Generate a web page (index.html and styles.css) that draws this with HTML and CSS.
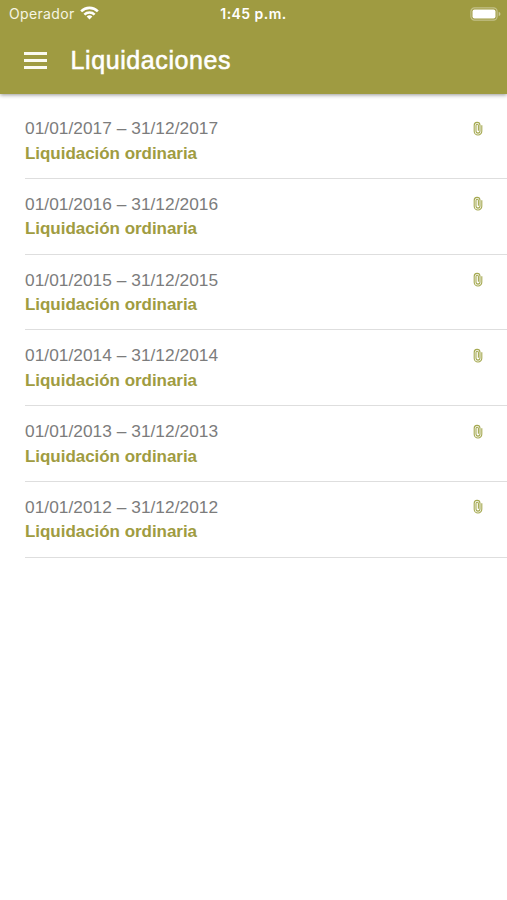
FILE: index.html
```html
<!DOCTYPE html>
<html lang="es">
<head>
<meta charset="utf-8">
<meta name="viewport" content="width=device-width, initial-scale=1">
<title>Liquidaciones</title>
<link rel="stylesheet" href="styles.css">
</head>
<body>
<svg class="defs" aria-hidden="true">
  <symbol id="clip" viewBox="0 0 10 15"><path d="M7 4.2v5.9a2 2 0 0 1-4 0V4.5a1.2 1.2 0 0 1 2.4 0v5.2M7 4.2a2.9 2.9 0 0 0-5.8.2v5.8a3.8 3.8 0 0 0 7.6 0V4.2" fill="none" stroke="currentColor" stroke-width="1.1"/></symbol>
</svg>
<header class="header">
  <div class="status">
    <div class="carrier">
      <span>Operador</span>
      <svg class="wifi" viewBox="0 0 20 14" fill="none" stroke="#fff" stroke-width="2.7">
        <path d="M1.2 5.2a12.5 12.5 0 0 1 17.6 0M4.6 8.7a7.7 7.7 0 0 1 10.8 0"/>
        <path d="M10 13.9l-3-3.2a4.3 4.3 0 0 1 6 0z" fill="#fff" stroke="none"/>
      </svg>
    </div>
    <div class="time">1:45 p.m.</div>
    <svg class="battery" viewBox="0 0 31 14">
      <rect x="0.9" y="0.9" width="26.2" height="12.2" rx="3.6" fill="none" stroke="#fff" stroke-opacity=".38" stroke-width="1.2"/>
      <rect x="2.5" y="2.5" width="23" height="9" rx="2" fill="#fff"/>
      <path d="M28.7 4.8q1.8.8 1.8 2.2t-1.8 2.2z" fill="#fff" fill-opacity=".45"/>
    </svg>
  </div>
  <div class="toolbar">
    <div class="menu"><i></i><i></i><i></i></div>
    <h1 class="title">Liquidaciones</h1>
  </div>
</header>
<main class="list">
  <div class="row"><div><div class="date">01/01/2017 – 31/12/2017</div><div class="kind">Liquidación ordinaria</div></div><svg class="clip"><use href="#clip"/></svg></div>
  <div class="row"><div><div class="date">01/01/2016 – 31/12/2016</div><div class="kind">Liquidación ordinaria</div></div><svg class="clip"><use href="#clip"/></svg></div>
  <div class="row"><div><div class="date">01/01/2015 – 31/12/2015</div><div class="kind">Liquidación ordinaria</div></div><svg class="clip"><use href="#clip"/></svg></div>
  <div class="row"><div><div class="date">01/01/2014 – 31/12/2014</div><div class="kind">Liquidación ordinaria</div></div><svg class="clip"><use href="#clip"/></svg></div>
  <div class="row"><div><div class="date">01/01/2013 – 31/12/2013</div><div class="kind">Liquidación ordinaria</div></div><svg class="clip"><use href="#clip"/></svg></div>
  <div class="row"><div><div class="date">01/01/2012 – 31/12/2012</div><div class="kind">Liquidación ordinaria</div></div><svg class="clip"><use href="#clip"/></svg></div>
</main>
</body>
</html>
```
FILE: styles.css
```css
* { box-sizing: border-box; }
body {
  margin: 0;
  min-height: 900px;
  background: #fff;
  font-family: "Liberation Sans", Arial, sans-serif;
}
.defs { display: none; }
.header {
  height: 93.5px;
  background: #9f9b41;
  color: #fff;
  box-shadow: 0 1px 4px rgba(0, 0, 0, .42);
}
.status {
  display: grid;
  grid-template-columns: 1fr auto 1fr;
  align-items: center;
  height: 27px;
  padding: 0 6px 0 9px;
  font-family: Inter, sans-serif;
  font-size: 14px;
}
.carrier {
  display: flex;
  align-items: center;
  gap: 5px;
  color: #f6f5e4;
  letter-spacing: .35px;
}
.wifi { width: 19px; height: 14px; margin-top: -2px; }
.time { font-weight: 600; letter-spacing: .45px; margin-right: 3px; }
.battery { width: 31px; height: 14px; justify-self: end; }
.toolbar {
  display: flex;
  align-items: center;
  height: 66px;
  padding-left: 24px;
}
.menu {
  display: flex;
  flex-direction: column;
  gap: 4px;
  width: 22.5px;
  margin-right: 24px;
}
.menu i { height: 3px; background: #fbfaf0; }
.title {
  margin: 0;
  font-size: 25px;
  font-weight: 400;
  line-height: 30px;
  letter-spacing: .6px;
  -webkit-text-stroke: .55px #fff;
}
.list { padding: 9.7px 0 0 25px; }
.row {
  display: flex;
  justify-content: space-between;
  height: 75.75px;
  padding: 13px 24px 0 0;
  border-bottom: 1.5px solid #dedede;
}
.date {
  color: #7c7c7c;
  font-size: 17.3px;
  line-height: 24.5px;
  letter-spacing: .04px;
  white-space: nowrap;
}
.kind {
  color: #9f9c41;
  font-size: 17px;
  font-weight: 700;
  line-height: 25.5px;
  letter-spacing: -.04px;
  white-space: nowrap;
}
.clip { width: 10px; height: 15px; margin-top: 4.5px; color: #a5a951; }
```
